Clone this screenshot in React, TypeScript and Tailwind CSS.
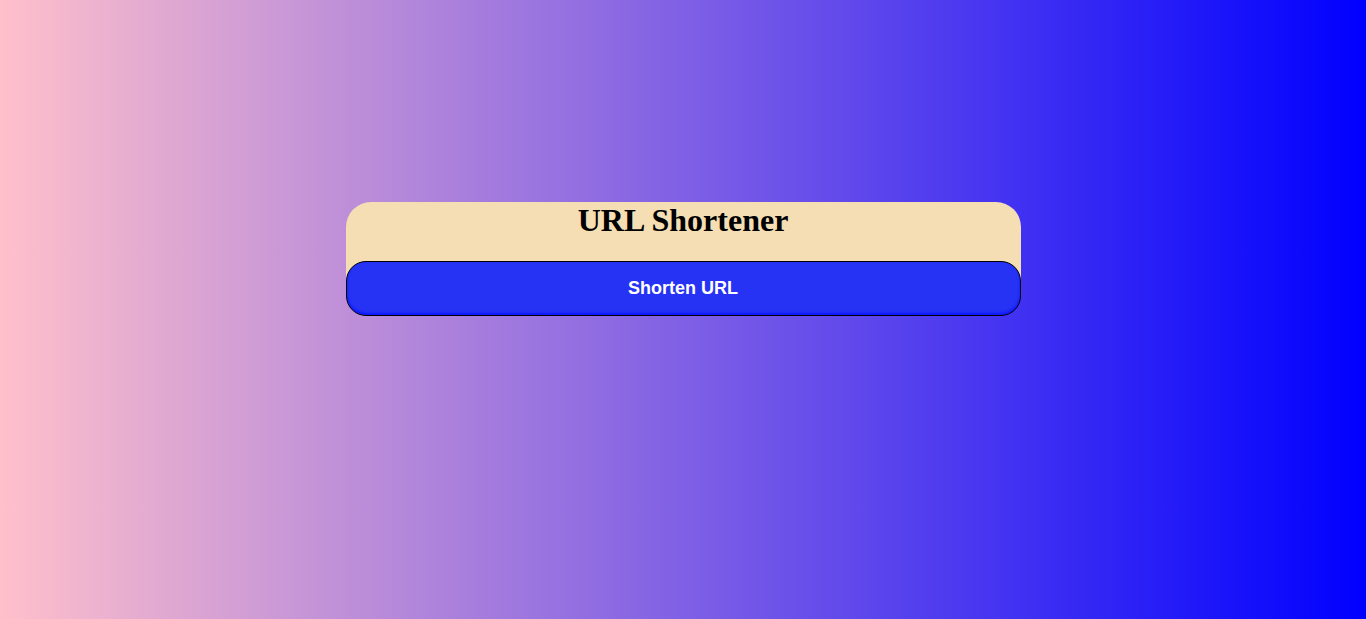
export default function App() {
  return (
    <div className="min-h-[619px] w-full bg-[linear-gradient(to_right,#ffc0cb,#0000ff)] pt-[202px]">
      <div className="mx-auto w-[675px] rounded-[25px] bg-[#f5deb3]">
        <h1 className="mb-[22px] text-center text-[32px] font-bold leading-[37px] text-black [font-family:'Liberation_Serif',serif]">
          URL Shortener
        </h1>
        <button
          type="button"
          className="block h-[55px] w-full rounded-[20px] border border-black bg-[#2633f4] text-[18px] font-bold text-white shadow-[inset_0_-2px_3px_#0a14ff] [font-family:'Liberation_Sans',Arial,sans-serif]"
        >
          Shorten URL
        </button>
      </div>
    </div>
  );
}
